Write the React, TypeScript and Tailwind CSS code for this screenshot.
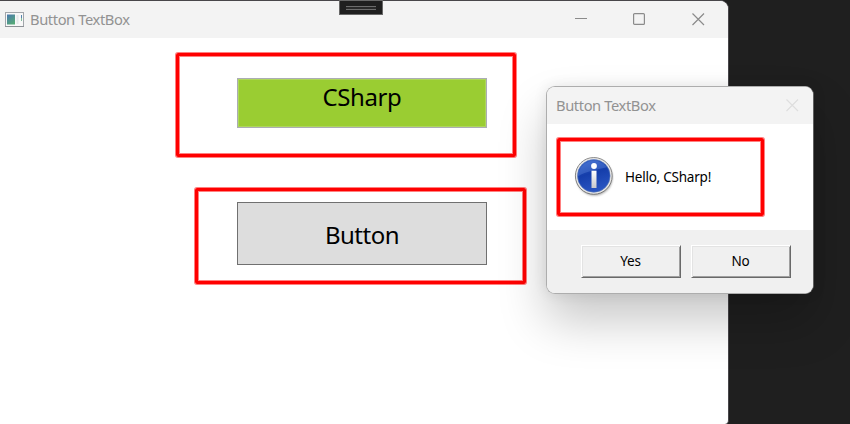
import type { ReactNode } from "react";

const frame =
  "border-[3px] border-[#ff0000] rounded-[2px] shadow-[0_0_0_1px_#ff8080,inset_0_0_0_1px_#ff8080]";

function AppIcon() {
  return (
    <svg width="20" height="16" viewBox="0 0 20 16" className="block">
      <defs>
        <linearGradient id="app-pane" x1="0" y1="0" x2="0.6" y2="1">
          <stop offset="0" stopColor="#4a78b0" />
          <stop offset="1" stopColor="#55a878" />
        </linearGradient>
      </defs>
      <rect x="0.5" y="0.5" width="18" height="14" fill="#f8f8f8" stroke="#a2a6ab" />
      <path d="M0 14.5h19" stroke="#8d9196" />
      <rect x="2" y="2.5" width="8" height="10" fill="url(#app-pane)" />
      <path d="M12.5 3v9" stroke="#e4e8ea" strokeWidth="2" />
      <path d="M16.5 3v3" stroke="#5583ad" />
      <path d="M16.5 6v3" stroke="#7dbb9a" />
    </svg>
  );
}

function CloseIcon({ className }: { className: string }) {
  return (
    <svg width="13" height="13" viewBox="0 0 13 13" className={className} fill="none" stroke="currentColor">
      <path d="M0.5 0.5l11.5 11.5M12 0.5L0.5 12" strokeWidth="1.2" />
    </svg>
  );
}

function InfoIcon() {
  return (
    <svg width="40" height="42" viewBox="0 0 40 42" className="block">
      <defs>
        <linearGradient id="info-ring" x1="0" y1="0" x2="0" y2="1">
          <stop offset="0" stopColor="#8f8f8f" />
          <stop offset="1" stopColor="#777777" />
        </linearGradient>
        <linearGradient id="info-ball" x1="0" y1="0" x2="0.3" y2="1">
          <stop offset="0" stopColor="#3563cc" />
          <stop offset="0.5" stopColor="#153eab" />
          <stop offset="1" stopColor="#2853c0" />
        </linearGradient>
        <linearGradient id="info-stem" x1="0" y1="0" x2="0" y2="1">
          <stop offset="0" stopColor="#ffffff" />
          <stop offset="1" stopColor="#c8c8cc" />
        </linearGradient>
        <filter id="info-blur" x="-20%" y="-20%" width="140%" height="140%">
          <feGaussianBlur stdDeviation="0.9" />
        </filter>
      </defs>
      <circle cx="20.5" cy="20.5" r="18" fill="#777" opacity="0.65" filter="url(#info-blur)" />
      <circle cx="19.8" cy="18.9" r="18.4" fill="#e6e6e6" stroke="url(#info-ring)" strokeWidth="1" />
      <circle cx="19.8" cy="18.9" r="16.3" fill="url(#info-ball)" stroke="#5878b8" strokeWidth="0.6" />
      <path d="M3.8 19.5a16 16 0 0 1 29-9.2C25 12.2 12 14.2 3.8 19.5z" fill="#7aa2ea" opacity="0.28" />
      <circle cx="20" cy="9" r="2.9" fill="#fff" />
      <rect x="17.5" y="13.7" width="5" height="17.3" fill="url(#info-stem)" />
    </svg>
  );
}

function DialogButton({ children }: { children: ReactNode }) {
  return (
    <button className="h-[33px] w-[100px] border border-t-white border-l-white border-r-[#696969] border-b-[#696969] bg-[#f0f0f0] pr-px pb-px text-[13.5px] leading-5 tracking-[-0.2px] text-black shadow-[inset_1px_1px_0_#e3e3e3,inset_-1px_-1px_0_#a0a0a0]">
      {children}
    </button>
  );
}

function MessageDialog() {
  return (
    <section className="absolute top-[86px] left-[546px] flex h-[208px] w-[268px] flex-col overflow-hidden rounded-[9px] border border-[#adadad] border-r-[#606060] bg-white shadow-[0_27px_48px_rgba(0,0,0,0.22),0_0_14px_rgba(0,0,0,0.09)]">
      <header className="flex h-[37px] shrink-0 items-center justify-between bg-[#f3f3f3] pr-[14px] pl-[9px]">
        <h2 className="text-[14.7px] tracking-[-0.4px] whitespace-nowrap text-[#929292]">Button TextBox</h2>
        <CloseIcon className="text-[#dedede]" />
      </header>
      <div className="h-[106px] shrink-0 pt-[14px] pl-[10px]">
        <div className={`flex h-[78px] w-[207px] pt-[16px] pl-[14px] ${frame}`}>
          <InfoIcon />
          <p className="ml-[11px] pt-[10px] text-[13.5px] leading-5 tracking-[-0.23px] whitespace-nowrap text-black">
            Hello, CSharp!
          </p>
        </div>
      </div>
      <footer className="flex flex-1 gap-[10px] bg-[#f0f0f0] pt-[15px] pl-[34px]">
        <DialogButton>Yes</DialogButton>
        <DialogButton>No</DialogButton>
      </footer>
    </section>
  );
}

export default function App() {
  return (
    <main className="relative h-[424px] w-[850px] overflow-hidden bg-[#1f1f1f] font-['Noto_Sans','Open_Sans',sans-serif]">
      <section className="flex h-[424px] w-[729px] flex-col overflow-hidden rounded-tr-[9px] rounded-br-[4px] border-t border-r border-[#48464a] bg-white">
        <header className="flex h-[37px] shrink-0 items-center bg-[#f3f3f3] pr-[23px] pl-[5px]">
          <AppIcon />
          <h1 className="ml-[5px] text-[14.7px] tracking-[-0.4px] whitespace-nowrap text-[#929292]">Button TextBox</h1>
          <div className="ml-auto flex items-center text-[#8b8b8b]">
            <svg width="13" height="13" viewBox="0 0 13 13" fill="none" stroke="currentColor">
              <path d="M0 5.5h12" />
            </svg>
            <svg width="12" height="13" viewBox="0 0 12 13" className="ml-[45px]" fill="none" stroke="currentColor" strokeWidth="1.2">
              <rect x="0.6" y="0.6" width="10.8" height="10.8" rx="1" />
            </svg>
            <CloseIcon className="ml-[47px]" />
          </div>
        </header>
        <div className="flex flex-col items-start pt-[15px]">
          <div className={`ml-[176px] h-[104px] w-[340px] pt-[22px] pl-[58px] ${frame}`}>
            <div className="h-[50px] w-[250px] border border-[#abadb3] bg-[#9acd32] pt-[2px] text-center text-[24px] leading-[32px] tracking-[-0.4px] text-black shadow-[inset_0_0_0_1px_#aed75b]">
              CSharp
            </div>
          </div>
          <div className={`mt-[31px] ml-[195px] h-[96px] w-[331px] pt-[11px] pl-[39px] ${frame}`}>
            <button className="h-[63px] w-[250px] border border-[#707070] bg-[#dddddd] pt-[2px] text-center text-[24px] leading-[32px] tracking-[-0.5px] text-black">
              Button
            </button>
          </div>
        </div>
      </section>
      <div className="absolute top-0 left-[339px] flex h-[15px] w-[44px] flex-col items-center border border-[#686868] bg-[#1f1f1f] pt-[5px]">
        <span className="block h-[4px] w-[30px] border-t border-b border-[#6c6c6c] bg-[#2a2a2a]" />
      </div>
      <MessageDialog />
    </main>
  );
}
